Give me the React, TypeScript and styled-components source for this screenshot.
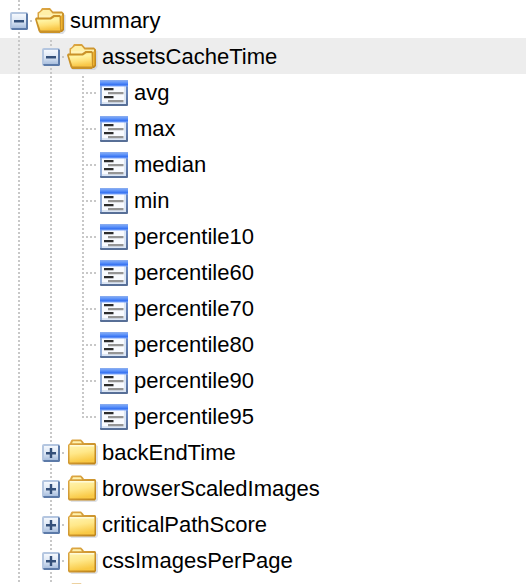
import React from "react";
import styled, { createGlobalStyle, css } from "styled-components";

const GlobalStyle = createGlobalStyle`
  body {
    margin: 0;
    background: #fff;
    color: #000;
    font-family: "Liberation Sans", Arial, Helvetica, sans-serif;
    font-size: 22px;
  }
`;

type Line = "full" | "elbow" | "tee";

const Viewport = styled.div`
  height: 100vh;
  overflow: hidden;
`;

const Tree = styled.ul`
  list-style: none;
  margin: 0;
  padding: 0;
`;

const vertical = "repeating-linear-gradient(to bottom, transparent 0 2px, #c8c8c8 2px 4px)";
const horizontal = "repeating-linear-gradient(to right, #c8c8c8 0 2px, transparent 2px 4px)";

const Cell = styled.span<{ $line: Line }>`
  flex: none;
  width: 32px;
  align-self: stretch;
  background-repeat: no-repeat;
  ${({ $line }) =>
    $line === "full"
      ? css`
          background-image: ${vertical};
          background-size: 2px 100%;
          background-position: 15px 0;
        `
      : css`
          background-image: ${vertical}, ${horizontal};
          background-size: 2px ${$line === "tee" ? "100%" : "20px"}, 10px 2px;
          background-position: 15px 0, 19px 18px;
        `}
`;

const Node = styled.div<{ $selected?: boolean }>`
  display: flex;
  align-items: center;
  height: 36px;
  padding-left: 3px;
  white-space: nowrap;
  background: ${({ $selected }) => ($selected ? "#ededed" : "transparent")};
`;

const Lead = styled(Node)`
  height: 2px;

  ${Cell} {
    background-image: linear-gradient(#c8c8c8, #c8c8c8);
  }
`;

const Toggle = styled.button`
  flex: none;
  display: flex;
  width: 32px;
  height: 36px;
  padding: 0;
  border: 0;
  background: none;
  cursor: pointer;
`;

const Icon = styled.svg`
  flex: none;
  display: block;
  width: 32px;
  height: 36px;
`;

const Label = styled.a`
  margin-left: 3px;
  padding-top: 2px;
  color: inherit;
  line-height: 34px;
  text-decoration: none;
`;

function Gradients() {
  return (
    <svg width="0" height="0" display="block" aria-hidden="true">
      <defs>
        <linearGradient id="box" x1="0" y1="0" x2="0" y2="1">
          <stop offset="0" stopColor="#f4f8fd" />
          <stop offset="0.5" stopColor="#dde7f5" />
          <stop offset="1" stopColor="#a9bfde" />
        </linearGradient>
        <linearGradient id="closed" x1="0" y1="0" x2="0.25" y2="1">
          <stop offset="0" stopColor="#fff4b0" />
          <stop offset="0.5" stopColor="#ffe88a" />
          <stop offset="1" stopColor="#f9c945" />
        </linearGradient>
        <linearGradient id="flap" x1="0" y1="0" x2="0.2" y2="1">
          <stop offset="0" stopColor="#fdd85c" />
          <stop offset="0.3" stopColor="#fff4a4" />
          <stop offset="0.65" stopColor="#ffe27a" />
          <stop offset="1" stopColor="#f8c748" />
        </linearGradient>
        <linearGradient id="edge" x1="0" y1="0" x2="1" y2="1">
          <stop offset="0" stopColor="#e0aa48" />
          <stop offset="1" stopColor="#bd8318" />
        </linearGradient>
        <linearGradient id="title" x1="0" y1="0" x2="0" y2="1">
          <stop offset="0" stopColor="#8fb0ee" />
          <stop offset="0.4" stopColor="#5f94fa" />
          <stop offset="0.7" stopColor="#3b76f2" />
          <stop offset="1" stopColor="#7ba5fb" />
        </linearGradient>
        <linearGradient id="side" x1="0" y1="0" x2="0" y2="1">
          <stop offset="0" stopColor="#7196dc" />
          <stop offset="1" stopColor="#566d94" />
        </linearGradient>
      </defs>
    </svg>
  );
}

function ToggleIcon({ open }: { open: boolean }) {
  return (
    <Icon viewBox="0 0 32 36" aria-hidden="true">
      <path d="M15 2h2v2h-2zM15 6h2v2h-2zM15 30h2v2h-2zM15 34h2v2h-2zM27 18h2v2h-2z" fill="#c8c8c8" />
      <rect x="7" y="10" width="18" height="18" rx="2" fill="#b4c6e0" />
      <path d="M23 11l2 1v15l-1 1H9l-1-2h15z" fill="#5c7aa8" />
      <rect x="9" y="12" width="14" height="14" fill="url(#box)" />
      <path d="M11 18h10v2.500H11z" fill="#34507a" />
      {!open && <path d="M14.800 14h2.400v10h-2.400z" fill="#34507a" />}
    </Icon>
  );
}

function FolderIcon({ open }: { open: boolean }) {
  if (open) {
    return (
      <Icon viewBox="0 0 32 36" aria-hidden="true">
        <path d="M4 30l2 2h22l2.500-3V13L28 12v17z" fill="#c9ced8" opacity="0.7" />
        <path d="M2.500 20V10.500L5 9l2-3h8l3 3.500h9l2 2V28l-2 2H6z" fill="url(#edge)" />
        <path d="M4 18v-6.500L8 8h6.500l3 3.500H27V14H4z" fill="#fff0a8" />
        <path d="M4 13h23v6H4z" fill="#fff3b8" />
        <path d="M0 17l1-1.500h14l3.500-2.500H25l1.500 2v14l-1.500 2H5l-1.500-2z" fill="#ca9228" />
        <path d="M1.800 17.500H16l3.500-2.500h5L25 28.500H5.500z" fill="url(#flap)" />
        <path d="M26 13.500h1.500V27.500H26z" fill="#f0b430" />
      </Icon>
    );
  }
  return (
    <Icon viewBox="0 0 32 36" aria-hidden="true">
      <path d="M3 30l1 2h25l2-2V12l-2-1v19z" fill="#c9ced8" opacity="0.6" />
      <path d="M1 11l2-2 1-2.500 1-1h9l2 2 1 1.500h11l1 1v19l-1 1.500H2L1 29z" fill="url(#edge)" />
      <path d="M5 9.300l1-2h7.500l1.500 2z" fill="#fff3b0" />
      <path d="M2.500 11h25v17.500h-25z" fill="url(#closed)" />
      <path d="M3 11h24v1.500H3z" fill="#fffbd8" />
    </Icon>
  );
}

function MetricIcon() {
  return (
    <Icon viewBox="0 0 32 36" aria-hidden="true">
      <rect x="1" y="6" width="28" height="26" rx="1" fill="url(#side)" />
      <path d="M1 12h2v18H1z" fill="#91abd6" />
      <path d="M3 12h24v18H3z" fill="#dce6f4" />
      <path d="M3 12h22v16H3z" fill="#f8fafe" />
      <path d="M1 6h28v6.500H1z" fill="url(#title)" />
      <path d="M5 14h9.500v2.200H5zM5 22h9.500v2.200H5z" fill="#2c2c2c" />
      <path d="M9 18h15.500v2.200H9zM9 26h15.500v2.200H9z" fill="#959595" />
    </Icon>
  );
}

interface Folder {
  name: string;
  open?: boolean;
  selected?: boolean;
  children?: string[];
}

const folders: Folder[] = [
  {
    name: "assetsCacheTime",
    open: true,
    selected: true,
    children: [
      "avg",
      "max",
      "median",
      "min",
      "percentile10",
      "percentile60",
      "percentile70",
      "percentile80",
      "percentile90",
      "percentile95",
    ],
  },
  { name: "backEndTime" },
  { name: "browserScaledImages" },
  { name: "criticalPathScore" },
  { name: "cssImagesPerPage" },
  { name: "" },
];

function FolderRow({ folder, depth }: { folder: Folder; depth: number }) {
  const open = Boolean(folder.open);
  return (
    <Node $selected={folder.selected}>
      {Array.from({ length: depth }, (_, i) => (
        <Cell key={i} $line="full" />
      ))}
      <Toggle type="button" aria-expanded={open} aria-label={`Toggle ${folder.name || "folder"}`}>
        <ToggleIcon open={open} />
      </Toggle>
      <FolderIcon open={open} />
      {folder.name && <Label href="#">{folder.name}</Label>}
    </Node>
  );
}

export default function App() {
  return (
    <Viewport>
      <GlobalStyle />
      <Gradients />
      <Lead>
        <Cell $line="full" />
      </Lead>
      <Tree>
        <li>
          <FolderRow folder={{ name: "summary", open: true }} depth={0} />
          <Tree>
            {folders.map((folder) => (
              <li key={folder.name}>
                <FolderRow folder={folder} depth={1} />
                {folder.children && (
                  <Tree>
                    {folder.children.map((name, i, all) => (
                      <li key={name}>
                        <Node>
                          <Cell $line="full" />
                          <Cell $line="full" />
                          <Cell $line={i === all.length - 1 ? "elbow" : "tee"} />
                          <MetricIcon />
                          <Label href="#">{name}</Label>
                        </Node>
                      </li>
                    ))}
                  </Tree>
                )}
              </li>
            ))}
          </Tree>
        </li>
      </Tree>
    </Viewport>
  );
}
